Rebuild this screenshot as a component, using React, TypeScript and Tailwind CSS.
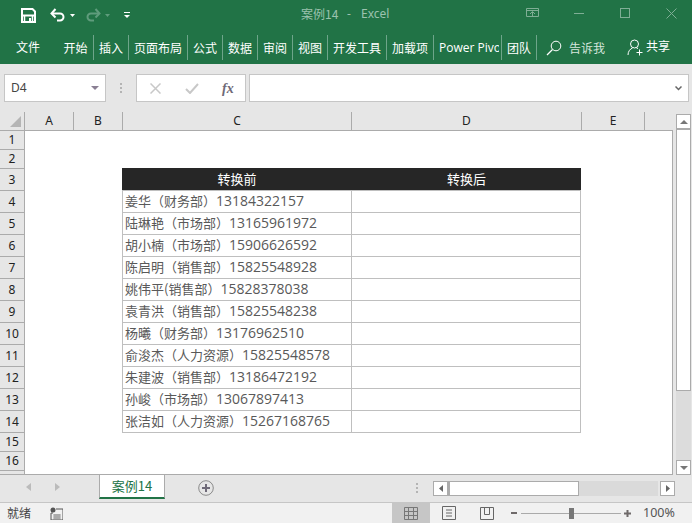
import React from 'react';

const cjk = '"Noto Sans CJK SC", "Noto Sans", sans-serif';

const people = [
  ['姜华（财务部）', '13184322157'],
  ['陆琳艳（市场部）', '13165961972'],
  ['胡小楠（市场部）', '15906626592'],
  ['陈启明（销售部）', '15825548928'],
  ['姚伟平(销售部）', '15828378038'],
  ['袁青洪（销售部）', '15825548238'],
  ['杨曦（财务部）', '13176962510'],
  ['俞浚杰（人力资源）', '15825548578'],
  ['朱建波（销售部）', '13186472192'],
  ['孙峻（市场部）', '13067897413'],
  ['张洁如（人力资源）', '15267168765'],
];

const tabs = [
  { label: '开始', w: 'w-[36px]' },
  { label: '插入', w: 'w-[35px]' },
  { label: '页面布局', w: 'w-[59px]' },
  { label: '公式', w: 'w-[35px]' },
  { label: '数据', w: 'w-[35px]' },
  { label: '审阅', w: 'w-[35px]' },
  { label: '视图', w: 'w-[35px]' },
  { label: '开发工具', w: 'w-[59px]' },
  { label: '加载项', w: 'w-[47px]' },
  { label: 'Power Pivot', w: 'w-[68px]' },
  { label: '团队', w: 'w-[35px]' },
];

const rowHeaders = [
  { n: 1, h: 'h-[19px]' },
  { n: 2, h: 'h-[19px]' },
  { n: 3, h: 'h-[22px]' },
  ...[4, 5, 6, 7, 8, 9, 10, 11, 12, 13, 14].map((n) => ({ n, h: 'h-[22px]' })),
  { n: 15, h: 'h-[19px]' },
  { n: 16, h: 'h-[19px]' },
];

const colHeaders = [
  { l: 'A', w: 'w-[49px]' },
  { l: 'B', w: 'w-[49px]' },
  { l: 'C', w: 'w-[229px]' },
  { l: 'D', w: 'w-[230px]' },
  { l: 'E', w: 'w-[63px]' },
  { l: '', w: 'w-[28px]' },
];

const TitleBar: React.FC = () => (
  <div className="h-[32px] pb-[2px] bg-[#217346] flex items-center relative">
    <svg width="15" height="15" viewBox="0 0 15 15" className="ml-[21px]">
      <path d="M1 1h10.500L14 3.500V14H1z" fill="none" stroke="#fff" strokeWidth="2" />
      <rect x="1" y="6.500" width="13" height="2" fill="#fff" />
      <path d="M3.500 8v6M11.500 8v6" stroke="#fff" strokeWidth="1.500" />
      <rect x="8" y="10" width="2" height="4" fill="#fff" />
    </svg>
    <svg width="16" height="14" viewBox="0 0 16 14" className="ml-[14px]">
      <path d="M2 5.500h8a3.500 3.500 0 0 1 0 7H7" fill="none" stroke="#fff" strokeWidth="2" />
      <path d="M5.500 1 1.500 5.500l4 4" fill="none" stroke="#fff" strokeWidth="2" />
    </svg>
    <svg width="5" height="3" viewBox="0 0 5 3" className="ml-[4px]"><path d="M0 0h5L2.500 3z" fill="#fff" /></svg>
    <svg width="16" height="14" viewBox="0 0 16 14" className="ml-[10px]">
      <path d="M14 5.500H6a3.500 3.500 0 0 0 0 7h3" fill="none" stroke="#5f9c7c" strokeWidth="2" />
      <path d="M10.500 1l4 4.500-4 4" fill="none" stroke="#5f9c7c" strokeWidth="2" />
    </svg>
    <svg width="5" height="3" viewBox="0 0 5 3" className="ml-[4px]"><path d="M0 0h5L2.500 3z" fill="#5f9c7c" /></svg>
    <svg width="6" height="6" viewBox="0 0 6 6" className="ml-[14px]">
      <path d="M0 0h6v1H0z" fill="#fff" />
      <path d="M0 3h6L3 6z" fill="#fff" />
    </svg>
    <span className="absolute left-[301px] top-[5px] text-[12px] leading-[18px] text-[#9cc2ae]" style={{ fontFamily: cjk }}>
      案例14
    </span>
    <span className="absolute left-[347px] top-[5px] text-[12px] leading-[18px] text-[#9cc2ae]" style={{ fontFamily: '"Noto Sans", sans-serif' }}>
      -
    </span>
    <span className="absolute left-[361px] top-[5px] text-[12px] leading-[18px] text-[#9cc2ae]" style={{ fontFamily: '"Noto Sans", sans-serif' }}>
      Excel
    </span>
    <svg width="13" height="11" viewBox="0 0 13 11" className="absolute left-[526px] top-[8px]">
      <path d="M.5.5h12v8H.5zM.5 2.500h12M4 6l2.500-2.500L9 6M6.500 4v4" fill="none" stroke="#7fae95" />
    </svg>
    <div className="absolute left-[574px] top-[13px] w-[10px] h-px bg-[#7fae95]" />
    <div className="absolute left-[620px] top-[8px] w-[10px] h-[10px] border border-[#7fae95]" />
    <svg width="11" height="11" viewBox="0 0 11 11" className="absolute left-[666px] top-[8px]">
      <path d="M.5.5l10 10M10.500.5l-10 10" stroke="#7fae95" fill="none" />
    </svg>
  </div>
);

const Ribbon: React.FC = () => (
  <div className="h-[32px] bg-[#217346] flex items-start text-white text-[12px]" style={{ fontFamily: cjk }}>
    <div className="w-[58px] pl-[16px] h-[28px] leading-[30px]">文件</div>
    {tabs.map((t) => (
      <div
        key={t.label}
        className={`${t.w} shrink-0 h-[25px] mt-[3px] leading-[25px] border-r border-[#6ea58a] text-center overflow-hidden whitespace-nowrap`}
      >
        {t.label === 'Power Pivot' ? (
          <span className="block w-[60px] ml-[5px] overflow-hidden text-left" style={{ fontFamily: '"Open Sans", sans-serif' }}>
            {t.label}
          </span>
        ) : (
          t.label
        )}
      </div>
    ))}
    <svg width="16" height="16" viewBox="0 0 16 16" className="ml-[9px] mt-[8px] shrink-0">
      <circle cx="10" cy="6" r="4.800" fill="none" stroke="#fff" />
      <path d="M6.500 9.500 1 15" stroke="#fff" strokeWidth="1.300" />
    </svg>
    <span className="ml-[7px] leading-[30px] mt-[1px] text-[#d6e6dd] shrink-0">告诉我</span>
    <svg width="17" height="17" viewBox="0 0 17 17" className="ml-[22px] mt-[7px] shrink-0">
      <circle cx="7.500" cy="5" r="4" fill="none" stroke="#fff" />
      <path d="M1 16c0-3.500 2-6 4.500-7M9.500 9 11 9.500M12.500 10.500v6M9.500 13.500h6" fill="none" stroke="#fff" />
    </svg>
    <span className="ml-[2px] leading-[28px] shrink-0">共享</span>
  </div>
);

const FormulaBar: React.FC = () => (
  <div className="h-[48px] bg-[#e6e6e6] flex items-start pt-[10px] pl-[4px]">
    <div className="w-[102px] h-[28px] bg-white border border-[#c6c6c6] flex items-center justify-between pl-[6px] pr-[6px]">
      <span className="text-[12px] text-[#444]" style={{ fontFamily: '"Noto Sans", sans-serif' }}>D4</span>
      <svg width="8" height="4" viewBox="0 0 8 4"><path d="M0 0h8L4 4z" fill="#8a7f93" /></svg>
    </div>
    <div className="w-[2px] ml-[14px] mt-[9px] flex flex-col gap-[2px]">
      <div className="h-[2px] bg-[#b4b4b4]" />
      <div className="h-[2px] bg-[#b4b4b4]" />
      <div className="h-[2px] bg-[#b4b4b4]" />
    </div>
    <div className="w-[110px] h-[28px] ml-[14px] bg-white border border-[#c6c6c6] flex items-center">
      <svg width="11" height="11" viewBox="0 0 11 11" className="ml-[13px]">
        <path d="M.5.5l10 10M10.500.5l-10 10" stroke="#c8c8c8" strokeWidth="1.500" fill="none" />
      </svg>
      <svg width="14" height="11" viewBox="0 0 14 11" className="ml-[24px]">
        <path d="M1 6l4 4 8-9" stroke="#c8c8c8" strokeWidth="2" fill="none" />
      </svg>
      <span className="ml-[23px] text-[14px] italic font-bold text-[#6f6a78]" style={{ fontFamily: '"Liberation Serif", serif' }}>fx</span>
    </div>
    <div className="w-[440px] h-[28px] ml-[3px] bg-white border border-[#c6c6c6] flex items-center justify-end pr-[6px] shrink-0">
      <svg width="7" height="5" viewBox="0 0 7 5"><path d="M.5.5l3 3 3-3" fill="none" stroke="#666" strokeWidth="1.500" /></svg>
    </div>
  </div>
);

const Sheet: React.FC = () => (
  <div className="h-[363px] bg-[#e6e6e6] flex">
    <div className="w-[673px] shrink-0 flex flex-col">
      <div className="h-[18px] flex shrink-0">
        <div className="w-[25px] shrink-0 relative border-r border-[#ababab]">
          <svg width="11" height="11" viewBox="0 0 11 11" className="absolute left-[10px] top-[4px]"><path d="M11 0v11H0z" fill="#b5b5b5" /></svg>
        </div>
        {colHeaders.map((c) => (
          <div key={c.w + c.l} className={`${c.w} shrink-0 text-center text-[12px] leading-[17px] text-[#222] border-r border-[#ababab] last:border-r-0`} style={{ fontFamily: '"Noto Sans", sans-serif' }}>
            {c.l}
          </div>
        ))}
      </div>
      <div className="flex flex-1 min-h-0 border-b border-t border-[#ababab]">
        <div className="w-[25px] shrink-0 border-r border-[#ababab]">
          {rowHeaders.map((r) => (
            <div key={r.n} className={`${r.h} border-b border-[#ababab] flex items-center justify-center text-[12px] text-[#222]`} style={{ fontFamily: '"Noto Sans", sans-serif' }}>
              {r.n}
            </div>
          ))}
        </div>
        <div className="flex-1 bg-white border-r border-[#ababab] pl-[97px] pt-[37px]">
          <div className="w-[459px]" style={{ fontFamily: cjk }}>
            <div className="grid grid-cols-[230px_229px] h-[23px] bg-[#262626] border-b border-[#bfbfbf] text-white text-[13px] leading-[22px] text-center">
              <div>转换前</div>
              <div>转换后</div>
            </div>
            {people.map(([name, phone]) => (
              <div key={phone} className="grid grid-cols-[230px_229px] h-[22px] border-b border-[#bfbfbf] text-[13px] leading-[19px] text-[#595959]">
                <div className="border-x border-[#bfbfbf] pl-[2px] whitespace-nowrap">
                  {name}
                  <span className="text-[14px]" style={{ fontFamily: '"Open Sans", sans-serif' }}>{phone}</span>
                </div>
                <div className="border-r border-[#bfbfbf]" />
              </div>
            ))}
          </div>
        </div>
      </div>
    </div>
    <div className="flex-1 pl-[3px] pt-[2px] flex flex-col">
      <div className="h-[15px] w-[15px] bg-white border border-[#ababab] flex items-center justify-center">
        <svg width="8" height="4" viewBox="0 0 8 4"><path d="M4 0l4 4H0z" fill="#777" /></svg>
      </div>
      <div className="h-[263px] w-[15px] bg-white border border-[#ababab] border-t-2 -mt-px" />
      <div className="flex-1 w-[15px] bg-[#dcdcdc]" />
      <div className="h-[15px] w-[15px] bg-white border border-[#ababab] flex items-center justify-center">
        <svg width="8" height="4" viewBox="0 0 8 4"><path d="M0 0h8L4 4z" fill="#777" /></svg>
      </div>
    </div>
  </div>
);

const TabBar: React.FC = () => (
  <div className="h-[28px] bg-[#e6e6e6] border-b border-[#c6c6c6] flex items-start" style={{ fontFamily: cjk }}>
    <svg width="5" height="8" viewBox="0 0 5 8" className="ml-[26px] mt-[8px]"><path d="M5 0v8L0 4z" fill="#bbb" /></svg>
    <svg width="5" height="8" viewBox="0 0 5 8" className="ml-[24px] mt-[8px]"><path d="M0 0v8l5-4z" fill="#bbb" /></svg>
    <div className="ml-[39px] w-[64px] h-[22px] bg-white border-x border-[#ababab] border-b-2 border-b-[#217346] text-center text-[13px] leading-[21px] text-[#217346] box-content">
      案例14
    </div>
    <svg width="16" height="16" viewBox="0 0 16 16" className="ml-[33px] mt-[5px]">
      <circle cx="8" cy="8" r="7.300" fill="none" stroke="#8a8a8a" />
      <path d="M4 8h8M8 4v8" stroke="#6f6a78" strokeWidth="2" />
    </svg>
    <div className="ml-[202px] mt-[8px] flex flex-col gap-[2px] w-[2px]">
      <div className="h-[2px] bg-[#b4b4b4]" />
      <div className="h-[2px] bg-[#b4b4b4]" />
      <div className="h-[2px] bg-[#b4b4b4]" />
    </div>
    <div className="ml-[15px] mt-[6px] flex items-start">
      <div className="w-[15px] h-[15px] bg-white border border-[#ababab] flex items-center justify-center">
        <svg width="4" height="7" viewBox="0 0 4 7"><path d="M4 0v7L0 3.500z" fill="#666" /></svg>
      </div>
      <div className="w-[131px] h-[15px] bg-white border border-[#ababab] border-l-2" />
      <div className="w-[79px] h-[15px] bg-[#dadada]" />
      <div className="w-[15px] h-[15px] ml-[2px] bg-white border border-[#ababab] flex items-center justify-center">
        <svg width="4" height="7" viewBox="0 0 4 7"><path d="M0 0v7l4-3.500z" fill="#666" /></svg>
      </div>
    </div>
  </div>
);

const StatusBar: React.FC = () => (
  <div className="h-[20px] bg-[#f1f1f1] flex items-center" style={{ fontFamily: cjk }}>
    <span className="ml-[7px] w-[24px] shrink-0 text-[12px] text-[#444]">就绪</span>
    <svg width="13" height="13" viewBox="0 0 13 13" className="ml-[19px] shrink-0">
      <circle cx="3" cy="3" r="2.500" fill="#555" />
      <path d="M6 2h7v11H1V6h2" fill="none" stroke="#555" />
      <path d="M3 8h8M3 10h8M3 12h8M5 7v5M7 7v5M9 7v5" stroke="#777" strokeWidth=".7" />
    </svg>
    <div className="ml-[329px] w-[38px] h-[20px] shrink-0 bg-[#c6c6c6] flex items-center justify-center">
      <svg width="14" height="13" viewBox="0 0 14 13"><path d="M.5.5h13v12H.5zM.5 4.500h13M.5 8.500h13M4.500.5v12M9.500.5v12" fill="none" stroke="#777" /></svg>
    </div>
    <div className="w-[38px] shrink-0 flex justify-center">
      <svg width="14" height="14" viewBox="0 0 14 14"><path d="M.5.5h13v13H.5zM4 4h6M4 7h6M4 10h6" fill="none" stroke="#666" /></svg>
    </div>
    <div className="w-[38px] shrink-0 flex justify-center">
      <svg width="14" height="13" viewBox="0 0 14 13"><path d="M.5.5h13v12H.5zM4.500.5v7h5v-7" fill="none" stroke="#666" /></svg>
    </div>
    <div className="ml-[5px] w-[6px] h-[2px] shrink-0 bg-[#6f6a6a]" />
    <div className="ml-[4px] w-[100px] h-px shrink-0 bg-[#aaa] relative">
      <div className="absolute left-[48px] -top-[5px] w-[5px] h-[11px] bg-[#777]" />
    </div>
    <svg width="7" height="7" viewBox="0 0 7 7" className="ml-[3px] shrink-0"><path d="M0 3.500h7M3.500 0v7" stroke="#6f6a6a" strokeWidth="2" /></svg>
    <span className="ml-[12px] text-[12.5px] text-[#555]" style={{ fontFamily: '"Noto Sans", sans-serif' }}>100%</span>
  </div>
);

export default function App() {
  return (
    <div className="w-[692px] h-[523px] flex flex-col overflow-hidden">
      <TitleBar />
      <Ribbon />
      <FormulaBar />
      <Sheet />
      <TabBar />
      <StatusBar />
    </div>
  );
}
